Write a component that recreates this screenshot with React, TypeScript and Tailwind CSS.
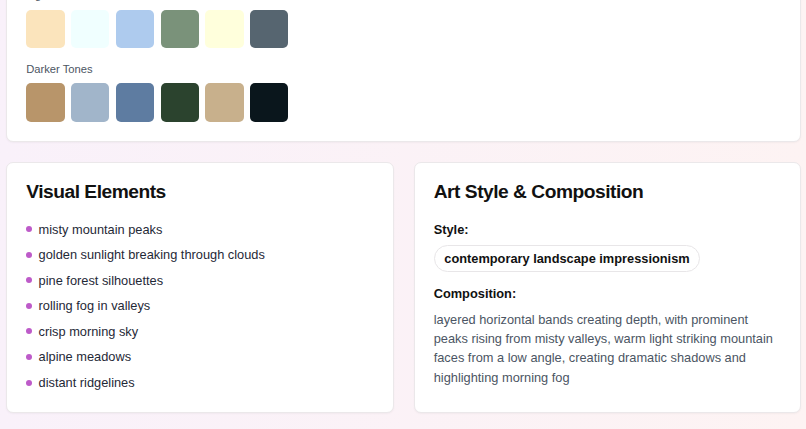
import React from 'react';

const lighter = ['#fbe4bc', '#f0ffff', '#aecbee', '#7a927a', '#ffffdc', '#566570'];
const darker = ['#b8956a', '#a1b5ca', '#5e7ca1', '#2b432e', '#c8b08c', '#0a161c'];

const elements = [
  'misty mountain peaks',
  'golden sunlight breaking through clouds',
  'pine forest silhouettes',
  'rolling fog in valleys',
  'crisp morning sky',
  'alpine meadows',
  'distant ridgelines',
];

function Swatches({ colors }: { colors: string[] }) {
  return (
    <div className="flex gap-[6.4px]">
      {colors.map(c => (
        <div key={c} className="w-[38.4px] h-[38.4px] rounded-[5px]" style={{ backgroundColor: c }} />
      ))}
    </div>
  );
}

export default function App(): React.ReactNode {
  return (
    <div
      className="h-[429px] overflow-hidden bg-gradient-to-r from-[#f9f1fa] to-[#fdf3f3] pl-[6px] pr-[5px]"
      style={{ fontFamily: '"Liberation Sans", Arial, sans-serif' }}
    >
      <div className="-mt-[33px] flex flex-col gap-[20px]">
        <div className="rounded-[7px] border border-[#ebe8ea] bg-white p-[19.2px] shadow-[0_1px_2px_rgba(0,0,0,0.04)]">
          <div className="text-[11.2px] leading-[16px] text-[#4b5563] mb-[6.4px]">Lighter Tones</div>
          <Swatches colors={lighter} />
          <div className="text-[11.2px] leading-[16px] text-[#4b5563] mt-[12.8px] mb-[6.4px]">Darker Tones</div>
          <Swatches colors={darker} />
        </div>

        <div className="grid grid-cols-2 gap-[20px]">
          <div className="rounded-[7px] border border-[#ebe8ea] bg-white px-[19.2px] pt-[16px] pb-[19.6px] shadow-[0_1px_2px_rgba(0,0,0,0.04)]">
            <h2 className="text-[19.2px] leading-[25.6px] font-bold tracking-tight text-[#111111] mb-[15.2px]">Visual Elements</h2>
            <ul className="flex flex-col gap-[6.4px]">
              {elements.map(e => (
                <li key={e} className="flex items-center gap-[6.4px] text-[12.8px] leading-[19.2px] text-[#1f2937]">
                  <span className="w-[6px] h-[6px] rounded-full bg-[#bd5bc9] shrink-0" />
                  <span>{e}</span>
                </li>
              ))}
            </ul>
          </div>

          <div className="rounded-[7px] border border-[#ebe8ea] bg-white px-[19.2px] pt-[16px] pb-[19.6px] shadow-[0_1px_2px_rgba(0,0,0,0.04)]">
            <h2 className="text-[19.2px] leading-[25.6px] font-bold tracking-tight text-[#111111] mb-[15.2px]">Art Style &amp; Composition</h2>
            <div className="text-[12.8px] leading-[19.2px] font-bold text-[#111111] mb-[6.4px]">Style:</div>
            <span className="inline-block rounded-full border border-[#e8e6e8] bg-white px-[9.6px] py-[2.7px] text-[12.8px] leading-[19.2px] font-bold text-[#111111]">
              contemporary landscape impressionism
            </span>
            <div className="text-[12.8px] leading-[19.2px] font-bold text-[#111111] mt-[12.8px] mb-[6.4px]">Composition:</div>
            <p className="text-[12.8px] leading-[19.2px] text-[#4b5563]">
              layered horizontal bands creating depth, with prominent peaks rising from misty valleys, warm light striking mountain faces from a low angle, creating dramatic shadows and highlighting morning fog
            </p>
          </div>
        </div>
      </div>
    </div>
  );
}
